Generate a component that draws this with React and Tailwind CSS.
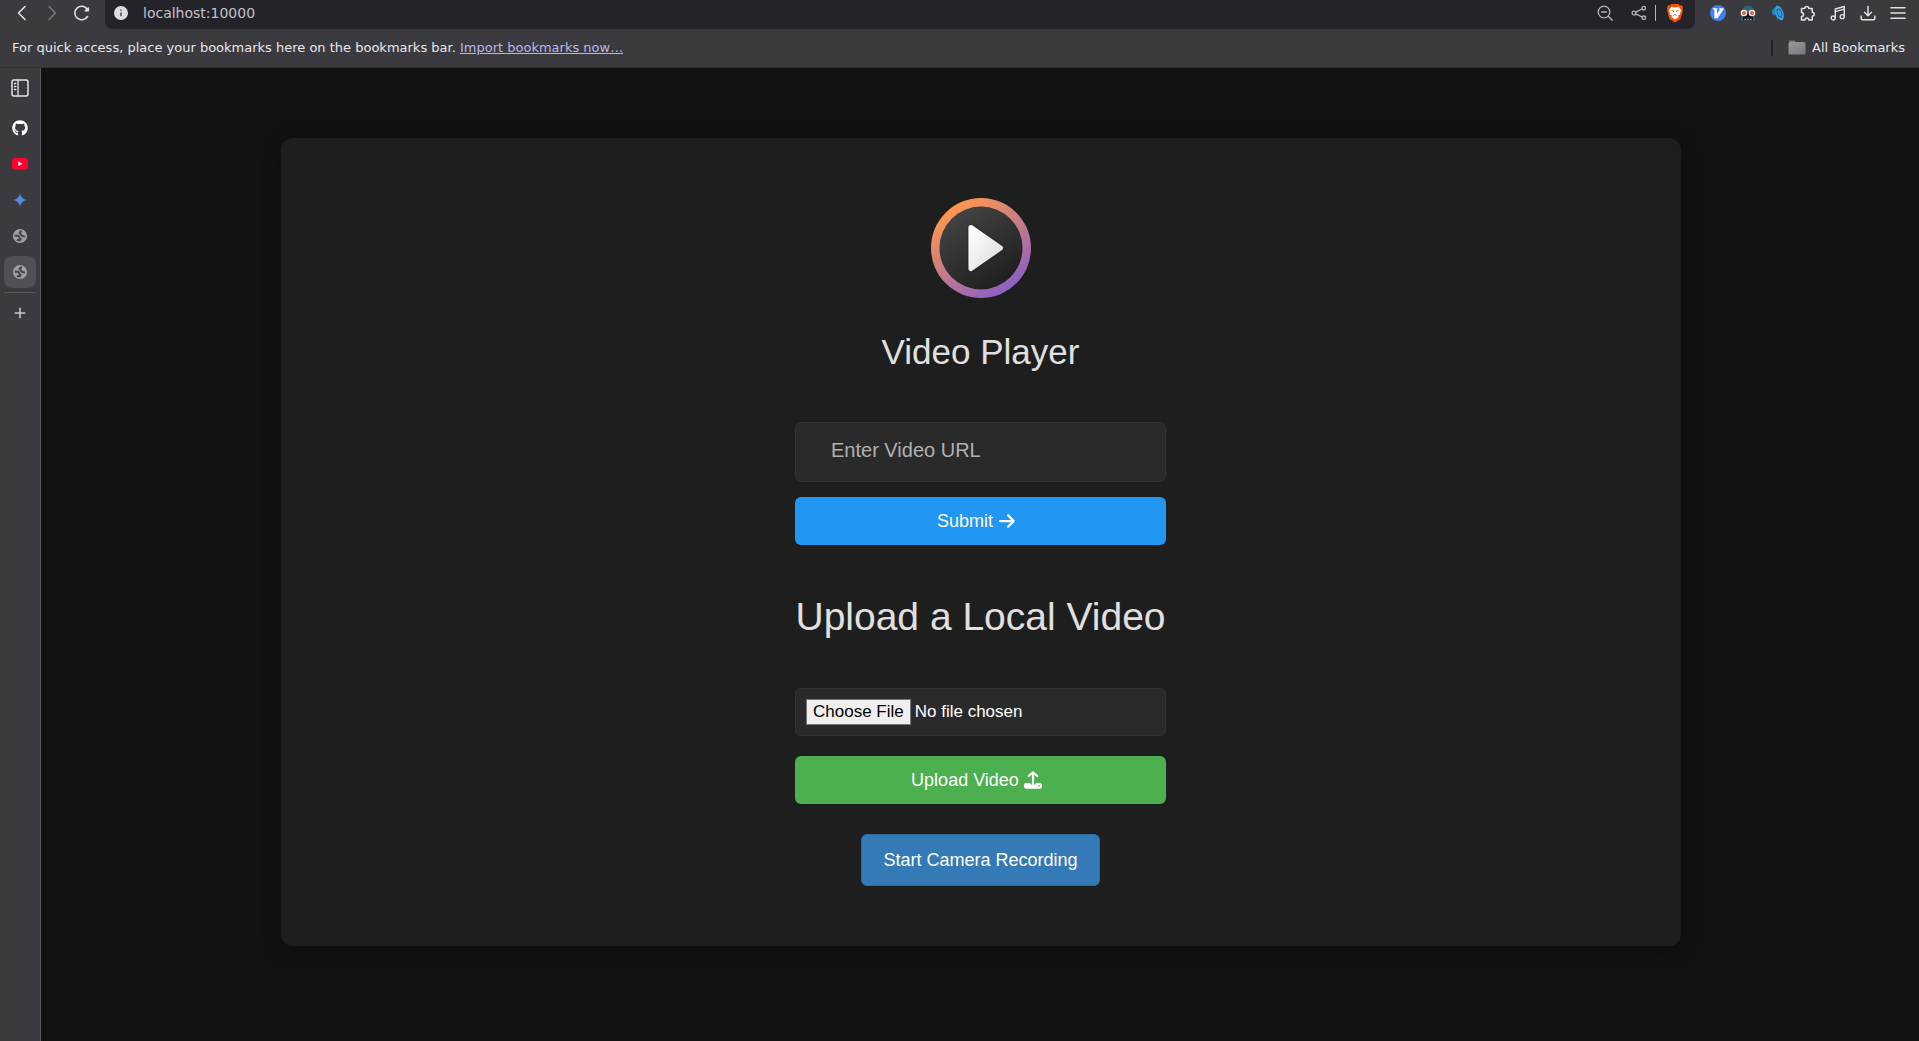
import React from 'react';
import { FaArrowRight } from 'react-icons/fa6';
import { FaGithub } from 'react-icons/fa';

const Icon = ({ children, className = 'size-4', box = '0 0 16 16' }) => (
  <svg
    viewBox={box}
    className={className}
    fill="none"
    stroke="currentColor"
    strokeWidth="1.3"
    strokeLinecap="round"
    strokeLinejoin="round"
    aria-hidden="true"
  >
    {children}
  </svg>
);

const Globe = () => (
  <svg viewBox="0 0 16 16" className="size-4" aria-hidden="true">
    <circle cx="8" cy="8" r="7.1" fill="#9aa0a6" />
    <g fill="none" stroke="#424146" strokeWidth="1.9" strokeLinejoin="round">
      <path d="M10 3.200 C7 3.800 6.800 5.500 8.800 6.200 C9.400 8.200 10.800 8.500 13 8.300" />
      <path d="M2.800 7.800 H5.600 C7.400 8 6.800 10 8.600 10.800 C9 12.600 7 12.700 5 11.600" />
    </g>
  </svg>
);

const PlayLogo = () => (
  <svg viewBox="0 0 100 100" className="size-[100px]" role="img" aria-label="Video Player logo">
    <defs>
      <linearGradient id="ring" x1="22" y1="8" x2="78" y2="92" gradientUnits="userSpaceOnUse">
        <stop offset="0" stopColor="#ff974c" />
        <stop offset="1" stopColor="#8c60c4" />
      </linearGradient>
      <linearGradient id="disc" x1="0.2" y1="0.1" x2="0.7" y2="0.9">
        <stop offset="0" stopColor="#424242" />
        <stop offset="1" stopColor="#212121" />
      </linearGradient>
      <linearGradient id="tri" x1="0" y1="0" x2="1" y2="1">
        <stop offset="0" stopColor="#ffffff" />
        <stop offset="1" stopColor="#dcdcdc" />
      </linearGradient>
      <filter id="soft" x="-30%" y="-30%" width="160%" height="160%">
        <feDropShadow dx="0" dy="0" stdDeviation="1.5" floodOpacity="0.5" />
      </filter>
    </defs>
    <circle cx="50" cy="50" r="50" fill="url(#ring)" />
    <circle cx="50" cy="50" r="41.5" fill="url(#disc)" />
    <path d="M40 29.500 L69.500 50 L40 70.500 Z" fill="url(#tri)" stroke="url(#tri)" strokeWidth="5" strokeLinejoin="round" filter="url(#soft)" />
  </svg>
);

const UploadIcon = () => (
  <svg viewBox="0 0 18 18" className="size-[18px]" fill="none" stroke="currentColor" aria-hidden="true">
    <path d="M9 13V1.500M4.700 5 9 1.200l4.300 3.800" strokeWidth="2.2" strokeLinecap="round" strokeLinejoin="round" />
    <path d="M2.200 12H6a3.200 3.200 0 0 0 6 0h3.800A2.200 2.200 0 0 1 18 14.200v1.300a2.200 2.200 0 0 1-2.200 2.200H2.200A2.200 2.200 0 0 1 0 15.500v-1.300A2.200 2.200 0 0 1 2.200 12Z" fill="currentColor" stroke="none" />
    <circle cx="15" cy="14.900" r="0.8" fill="#4caf50" stroke="none" />
  </svg>
);

const Toolbar = () => (
  <div className="flex h-[29px] items-start pr-[13px]">
    <div className="flex h-[26px] w-[105px] shrink-0 items-center gap-[10px] pl-3 text-[#e3e2e8]">
      <button aria-label="Back"><Icon className="size-5" box="0 0 20 20"><path d="M13 3.500 6.500 10l6.500 6.500" strokeWidth="1.6" /></Icon></button>
      <button aria-label="Forward" className="text-[#77767c]"><Icon className="size-5" box="0 0 20 20"><path d="M7 3.500 13.500 10 7 16.500" strokeWidth="1.6" /></Icon></button>
      <button aria-label="Reload">
        <Icon className="size-5" box="0 0 20 20">
          <path d="M15.500 13.500A6.800 6.800 0 1 1 15.500 6.500" strokeWidth="1.6" />
          <path d="M13.200 7.800h3.300V4.800Z" fill="currentColor" strokeWidth="1.2" />
        </Icon>
      </button>
    </div>
    <div className="flex h-[29px] grow items-center rounded-b-lg bg-[#24232a] pb-[3px] pr-[11px] pl-2 text-[#b5b4bb]">
      <button aria-label="Site information">
        <svg viewBox="0 0 16 16" className="size-4" aria-hidden="true">
          <circle cx="8" cy="8" r="7" fill="#dddce3" />
          <path d="M8 7.500v3.800M8 4.500v1.200" stroke="#55545b" strokeWidth="1.6" />
        </svg>
      </button>
      <input aria-label="Address" defaultValue="localhost:10000" className="ml-[14px] h-6 grow bg-transparent font-['DejaVu_Sans',sans-serif] text-[14px] text-[#c3c2c9] outline-none" />
      <button aria-label="Zoom"><Icon><circle cx="7" cy="7" r="5.800" /><path d="m11.300 11.300 4 4M4.500 7h5" /></Icon></button>
      <button aria-label="Share" className="ml-[18px]">
        <Icon>
          <circle cx="3" cy="8" r="1.900" /><circle cx="12.800" cy="3.200" r="1.800" /><circle cx="12.800" cy="12.800" r="1.800" />
          <path d="M4.800 7.200 11 4M4.800 8.800l6.200 3.200" />
        </Icon>
      </button>
      <span className="ml-2 h-4 w-px bg-[#b5b4bb]" />
      <button aria-label="Brave Shields" className="ml-[10px]">
        <svg viewBox="0 0 18 20" className="h-5 w-[18px]" aria-hidden="true">
          <path d="M5.500 1h7l1.500 1.500 2-.2L17 5l-.5 1.500.3 1.200-2.200 8.200L9 19.500l-5.600-3.600L1.200 7.700l.3-1.200L1 5l1-2.700 2 .2Z" fill="#ff5000" />
          <path d="m5.500 3.800 3.500.8 3.500-.8 3 3.400-1.500 2.800.3 1.500-2.500 1.200.9 1.300L9 16.500 5.300 14l.9-1.300-2.500-1.200.3-1.500-1.500-2.800Z" fill="#fff" />
          <path d="m5.500 7.300 2 .6-.3 1.300M12.500 7.300l-2 .6.3 1.300M7.300 12.500 9 11.400l1.700 1.100" fill="none" stroke="#ff5000" strokeWidth="0.9" />
        </svg>
      </button>
    </div>
    <div className="flex h-[26px] shrink-0 items-center gap-[14px] pl-[15px] text-[#e3e2e8]">
      <button aria-label="Vimium">
        <svg viewBox="0 0 16 16" className="size-4" aria-hidden="true">
          <circle cx="8" cy="8" r="8" fill="#3b82f0" />
          <path d="M2.800 3.300h4.700v1.200h-.5v4.200L10 4.500H9.200V3.300h4.300v1.200L7.500 13.200H4.300V4.500H2.800Z" fill="#fff" />
        </svg>
      </button>
      <button aria-label="Reader extension">
        <svg viewBox="0 0 16 16" className="size-4" aria-hidden="true">
          <path d="M2 6C3 2 5 .8 8 .8S13 2 14 6l1 9.500H1Z" fill="#2e6474" />
          <path d="M3 9h10v6.500H3Z" fill="#171b20" />
          <path d="M1 8h14" stroke="#171b20" strokeWidth="2" />
          <circle cx="4" cy="8" r="3.300" fill="#f5f0ec" /><circle cx="12" cy="8" r="3.300" fill="#f5f0ec" />
          <circle cx="4" cy="8" r="2.100" fill="#e5603f" /><circle cx="12" cy="8" r="2.100" fill="#e5603f" />
          <path d="M4.500 14.500h1.500M7.300 14.500h1.500M10 14.500h1.500" stroke="#aab2b8" strokeWidth="1.5" />
        </svg>
      </button>
      <button aria-label="Sound extension">
        <svg viewBox="0 0 16 16" className="size-4" aria-hidden="true">
          <path d="M7.500 0.500 2 5l.5 4.500 3.500 1 1 3 6 2Z" fill="#2586c4" />
          <ellipse cx="9.500" cy="8" rx="3.800" ry="7.500" transform="rotate(-18 9.500 8)" fill="#3ba1e0" />
          <ellipse cx="9.500" cy="8" rx="1.900" ry="4.200" transform="rotate(-18 9.500 8)" fill="none" stroke="#17638f" strokeWidth="1.1" />
        </svg>
      </button>
      <button aria-label="Extensions">
        <Icon><path d="M1.500 3.500h3.300a2 2 0 1 1 4 0h3.400v3.700a2 2 0 1 1 0 4V15H8.800a1.900 1.900 0 0 0-3.800 0H1.500v-3.500a2 2 0 0 0 0-4Z" strokeWidth="1.5" /></Icon>
      </button>
      <button aria-label="Media">
        <Icon><path d="M5.300 12.800V4l9-2.500v10" strokeWidth="1.4" /><path d="m5.300 6.700 9-2.500" strokeWidth="1.2" /><circle cx="3.200" cy="13" r="2" /><circle cx="12.200" cy="11.700" r="2" /></Icon>
      </button>
      <button aria-label="Downloads">
        <Icon><path d="M8 1.500v9M4.500 7.300 8 10.800l3.500-3.500M1.200 11v2.500c0 .8.500 1.300 1.300 1.300h11c.8 0 1.300-.5 1.300-1.300V11" strokeWidth="1.5" /></Icon>
      </button>
      <button aria-label="Menu">
        <Icon><path d="M1 2.800h14M1 8h14M1 13.200h14" strokeWidth="1.5" /></Icon>
      </button>
    </div>
  </div>
);

const Bookmarks = () => (
  <div className="flex h-[39px] items-center justify-between border-b border-[#323136] pb-px pr-[14px] pl-3 font-['DejaVu_Sans',sans-serif] text-[13px] text-[#e9e8ee]">
    <p>
      For quick access, place your bookmarks here on the bookmarks bar.{' '}
      <a href="#import" className="text-[#b9b5f0] underline">Import bookmarks now…</a>
    </p>
    <div className="flex items-center">
      <span className="mr-[15px] h-4 w-[2px] bg-[#222127]" />
      <button className="flex items-center gap-[6px]">
        <svg viewBox="0 0 18 15" className="h-[15px] w-[18px]" aria-hidden="true">
          <defs>
            <linearGradient id="folder" x1="0" y1="0" x2="1" y2="1">
              <stop offset="0" stopColor="#9a9a9f" />
              <stop offset="1" stopColor="#77777c" />
            </linearGradient>
          </defs>
          <path d="M1 2V0.500h6V2Z" fill="#77777c" />
          <rect x="0.5" y="2" width="17" height="12.5" rx="1.5" fill="url(#folder)" />
        </svg>
        All Bookmarks
      </button>
    </div>
  </div>
);

const Tab = ({ label, active, children }) => (
  <button aria-label={label} className={`flex h-8 w-8 items-center justify-center rounded-lg ${active ? 'bg-[#515055]' : ''}`}>
    {children}
  </button>
);

const Sidebar = () => (
  <aside className="flex w-[41px] shrink-0 flex-col items-center border-r border-[#5a595e] bg-[#3b3a3f] pt-1">
    <Tab label="Toggle sidebar">
      <Icon className="size-[18px] text-[#e3e2e8]" box="0 0 18 18">
        <rect x="1" y="1" width="16" height="16" rx="2" strokeWidth="1.5" />
        <path d="M7 1v16M3.500 4.500h1.300M3.500 7.500h1.300M3.500 10.500h1.300" />
      </Icon>
    </Tab>
    <nav className="mt-2 flex flex-col gap-1">
      <Tab label="GitHub"><FaGithub className="size-4 text-white" /></Tab>
      <Tab label="YouTube">
        <svg viewBox="0 0 16 12" className="h-3 w-4" aria-hidden="true">
          <rect width="16" height="11.5" rx="2.5" fill="#ff0033" />
          <path d="M6.300 3.500v4.600l4-2.300Z" fill="#fff" />
        </svg>
      </Tab>
      <Tab label="Gemini">
        <svg viewBox="0 0 16 16" className="size-4" aria-hidden="true">
          <defs><linearGradient id="gem"><stop offset="0" stopColor="#8577d8" /><stop offset="0.6" stopColor="#4292e0" /><stop offset="1" stopColor="#35a0dc" /></linearGradient></defs>
          <path d="M8 1.200C8.600 5 11 7.400 14.800 8 11 8.600 8.600 11 8 14.800 7.400 11 5 8.600 1.200 8 5 7.400 7.400 5 8 1.200Z" fill="url(#gem)" />
        </svg>
      </Tab>
      <Tab label="Local page"><Globe /></Tab>
      <Tab label="Video Player tab" active><Globe /></Tab>
    </nav>
    <hr className="mt-1 w-8 border-[#5a595e]" />
    <button aria-label="New tab" className="mt-1 flex h-8 w-8 items-center justify-center text-[#c9c8ce]">
      <Icon><path d="M8 3.200v9.600M3.200 8h9.600" strokeWidth="1.5" /></Icon>
    </button>
  </aside>
);

export default function App() {
  return (
    <div className="flex min-h-screen flex-col bg-[#3b3a3f]">
      <header>
        <Toolbar />
        <Bookmarks />
      </header>
      <div className="flex grow">
        <Sidebar />
        <main className="flex grow flex-col items-center bg-[#121212] pt-[70px] pl-px font-['Liberation_Sans',Arial,sans-serif]">
          <section className="flex w-full max-w-[1400px] flex-col items-center rounded-xl bg-[#1e1e1e] py-[60px] text-[#e0e0e0] shadow-[0_4px_20px_rgba(0,0,0,0.3)]">
            <PlayLogo />
            <h1 className="mt-[34px] text-[35px] leading-10">Video Player</h1>
            <div className="mt-[50px] flex min-w-[371px] flex-col">
              <form className="flex flex-col gap-[15px]" onSubmit={(e) => e.preventDefault()}>
                <input
                  aria-label="Video URL"
                  placeholder="Enter Video URL"
                  className="h-[60px] w-full rounded-md border border-[#333333] bg-[#2a2a2a] px-[35px] pb-1 text-[20px] placeholder:text-[#b0b0b0]"
                />
                <button className="flex h-12 items-center justify-center gap-[5px] rounded-md bg-[#2196f3] pr-2 text-[18px] text-white">
                  Submit <FaArrowRight className="size-[18px]" />
                </button>
              </form>
              <h2 className="mt-[50px] text-center text-[39px] leading-[44px]">Upload a Local Video</h2>
              <form className="mt-[49px] flex flex-col gap-5" onSubmit={(e) => e.preventDefault()}>
                <input
                  type="file"
                  aria-label="Choose a local video"
                  className="h-12 w-full rounded-md border border-[#333333] bg-[#2a2a2a] p-[10px] text-[17px] leading-6 text-white file:mr-1 file:border file:border-solid file:border-[#767676] file:bg-[#efefef] file:px-[6px] file:text-black"
                />
                <button className="flex h-12 items-center justify-center gap-[5px] rounded-md bg-[#4caf50] pr-2 text-[18px] text-white">
                  Upload Video <UploadIcon />
                </button>
              </form>
            </div>
            <button className="mt-[30px] h-[52px] rounded-md border border-[#2e6da4] bg-[#337ab7] px-[21px] text-[18px] text-white">
              Start Camera Recording
            </button>
          </section>
        </main>
      </div>
    </div>
  );
}
